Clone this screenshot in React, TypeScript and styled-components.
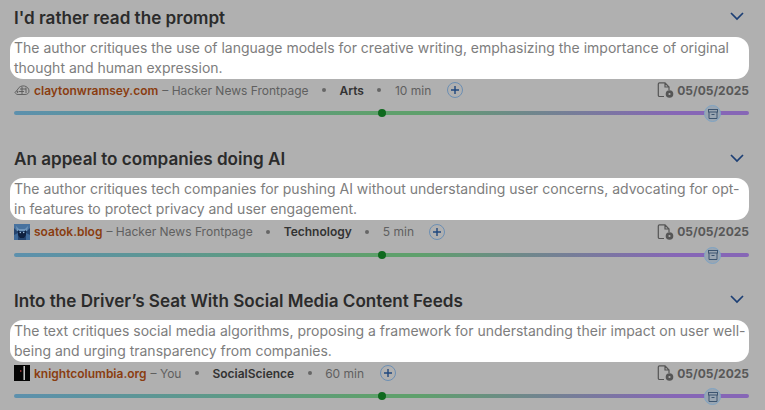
import React from "react";
import styled, { createGlobalStyle } from "styled-components";

const Global = createGlobalStyle`
  html, body { margin: 0; padding: 0; background: #b0b0b0; }
  body { font-family: Inter, "Liberation Sans", sans-serif; overflow: hidden; }
`;
const Page = styled.div`
  width: 765px; height: 410px; overflow: hidden; padding: 5px 16px 0 14px; box-sizing: border-box;
  display: flex; flex-direction: column; gap: 21.5px;
`;
const Item = styled.article`display: flex; flex-direction: column; height: 120px;`;
const TitleRow = styled.div`display: flex; align-items: center; justify-content: space-between; height: 25px;`;
const Title = styled.h2`margin: 0; font-size: 17.1px; line-height: 24px; font-weight: 600; color: #2b2b2b;`;
const Chevron = styled.svg`width: 16px; height: 16px; margin-right: 4px; margin-top: -3px; fill: none; stroke: #1c3f75; stroke-width: 1.7;`;
const Summary = styled.p`
  margin: 6.5px 0 0 -4px; padding: 1px 0 1px 4px; background: #fff; border-radius: 13px; box-sizing: border-box;
  font-size: 14px; line-height: 20px; height: 42px; color: #7d7d7d; font-weight: 400;
`;
const Meta = styled.div`display: flex; align-items: center; height: 20px; margin-top: 1.5px; font-size: 12px; color: #5f5f5f;`;
const Fav = styled.span`width: 16px; height: 16px; margin-right: 4px; flex: none; display: block;`;
const Site = styled.span`font-weight: 600; color: #8a3d10;`;
const Source = styled.span`margin-left: 4px;`;
const Dot = styled.span`width: 4px; height: 4px; border-radius: 50%; background: #666; margin: 0 13.5px;`;
const Cat = styled.span`font-weight: 600; color: #333;`;
const Add = styled.span`
  width: 14px; height: 14px; margin-left: 15.5px; border: 1px solid #6c8fb4; border-radius: 50%;
  display: flex; align-items: center; justify-content: center; color: #1f477e;
`;
const DateBox = styled.span`margin-left: auto; display: flex; align-items: center; gap: 3px; font-weight: 700; font-size: 12px; color: #585858;`;
const Track = styled.div`
  position: relative; height: 4px; margin-top: 11px; border-radius: 2px;
  background: linear-gradient(90deg, #5c90ad 0%, #5fa06c 49%, #5fa06c 55%, #8666b6 90%, #8666b6 100%);
`;
const Mid = styled.span`position: absolute; left: 364px; top: -2px; width: 8px; height: 8px; border-radius: 50%; background: #0f6a1e;`;
const Thumb = styled.span`
  position: absolute; left: 690px; top: -6px; width: 15px; height: 15px; border-radius: 50%;
  border: 1px solid #7fa4c4; background: #9aa6b2; display: flex; align-items: center; justify-content: center;
`;

const Rat = () => (
  <svg viewBox="0 0 16 16" fill="none" stroke="#5a5a5a" strokeWidth="0.9">
    <path d="M1 10.5 L4 7 C5 4.5 8 3.5 10.5 4 C13 4.5 15 6.5 15 9 C15 11.5 13 12.5 11 12.5 L4 12.5 C2.5 12.5 1.5 11.5 1 10.5Z" />
    <path d="M5 9.5 H10 M6 7 L12 7 M8 4.5 V12 M12 5.5 V11" />
    <circle cx="3.5" cy="9.8" r="0.6" fill="#5a5a5a" />
  </svg>
);
const Blue = () => (
  <svg viewBox="0 0 16 16">
    <rect width="16" height="16" fill="#24446f" />
    <path d="M0 0H16V4L13 7H3L0 4Z" fill="#47729f" />
    <path d="M2 2 L5 5 H11 L14 2 L13 7 H3Z" fill="#6f95bb" />
    <path d="M4 6 L6 8 H10 L12 6 L12 11 L10 14 H6 L4 11Z" fill="#0f2140" />
    <path d="M0 11 L4 9 V16 H0Z M16 11 L12 9 V16 H16Z" fill="#3f6a9a" />
    <circle cx="6.3" cy="8.5" r="0.8" fill="#9fc3e0" />
    <circle cx="9.7" cy="8.5" r="0.8" fill="#9fc3e0" />
  </svg>
);
const Black = () => (
  <svg viewBox="0 0 16 16">
    <rect width="16" height="16" fill="#050505" />
    <rect x="9.5" y="1" width="1.4" height="14" fill="#d8d8d8" />
    <rect x="6" y="5" width="1.4" height="2" fill="#8a3030" />
  </svg>
);

const items = [
  { t: "I'd rather read the prompt", s: "The author critiques the use of language models for creative writing, emphasizing the importance of original thought and human expression.", site: "claytonwramsey.com", src: "– Hacker News Frontpage", cat: "Arts", min: "10 min", Icon: Rat },
  { t: "An appeal to companies doing AI", s: "The author critiques tech companies for pushing AI without understanding user concerns, advocating for opt-in features to protect privacy and user engagement.", site: "soatok.blog", src: "– Hacker News Frontpage", cat: "Technology", min: "5 min", Icon: Blue },
  { t: "Into the Driver’s Seat With Social Media Content Feeds", s: "The text critiques social media algorithms, proposing a framework for understanding their impact on user well-being and urging transparency from companies.", site: "knightcolumbia.org", src: "– You", cat: "SocialScience", min: "60 min", Icon: Black },
];

export default function App() {
  return (
    <Page>
      <Global />
      {items.map(({ t, s, site, src, cat, min, Icon }) => (
        <Item key={t}>
          <TitleRow>
            <Title>{t}</Title>
            <Chevron viewBox="0 0 16 16"><path d="M2 5 L8 11 L14 5" /></Chevron>
          </TitleRow>
          <Summary>{s}</Summary>
          <Meta>
            <Fav><Icon /></Fav>
            <Site>{site}</Site>
            <Source>{src}</Source>
            <Dot />
            <Cat>{cat}</Cat>
            <Dot />
            <span>{min}</span>
            <Add>
              <svg width="8" height="8" viewBox="0 0 8 8" stroke="currentColor" strokeWidth="1.4"><path d="M4 0V8M0 4H8" /></svg>
            </Add>
            <DateBox>
              <svg width="17" height="16" viewBox="0 0 17 16" fill="none">
                <path d="M7 14.5H2.5A1.2 1.2 0 0 1 1.3 13.3V2A1.2 1.2 0 0 1 2.5 .8H8L12 5V8M8 .8V5H12" stroke="#555" strokeWidth="1.2" />
                <circle cx="12.5" cy="12" r="3.8" fill="#555" />
                <circle cx="12.5" cy="12" r="1.1" fill="#b0b0b0" />
              </svg>
              05/05/2025
            </DateBox>
          </Meta>
          <Track>
            <Mid />
            <Thumb>
              <svg width="10" height="10" viewBox="0 0 10 10" fill="none" stroke="#3d5570" strokeWidth="1">
                <rect x="0.5" y="0.5" width="9" height="2.5" />
                <path d="M1 3V9.5H9V3M3.5 5.5H6.5" />
              </svg>
            </Thumb>
          </Track>
        </Item>
      ))}
    </Page>
  );
}
